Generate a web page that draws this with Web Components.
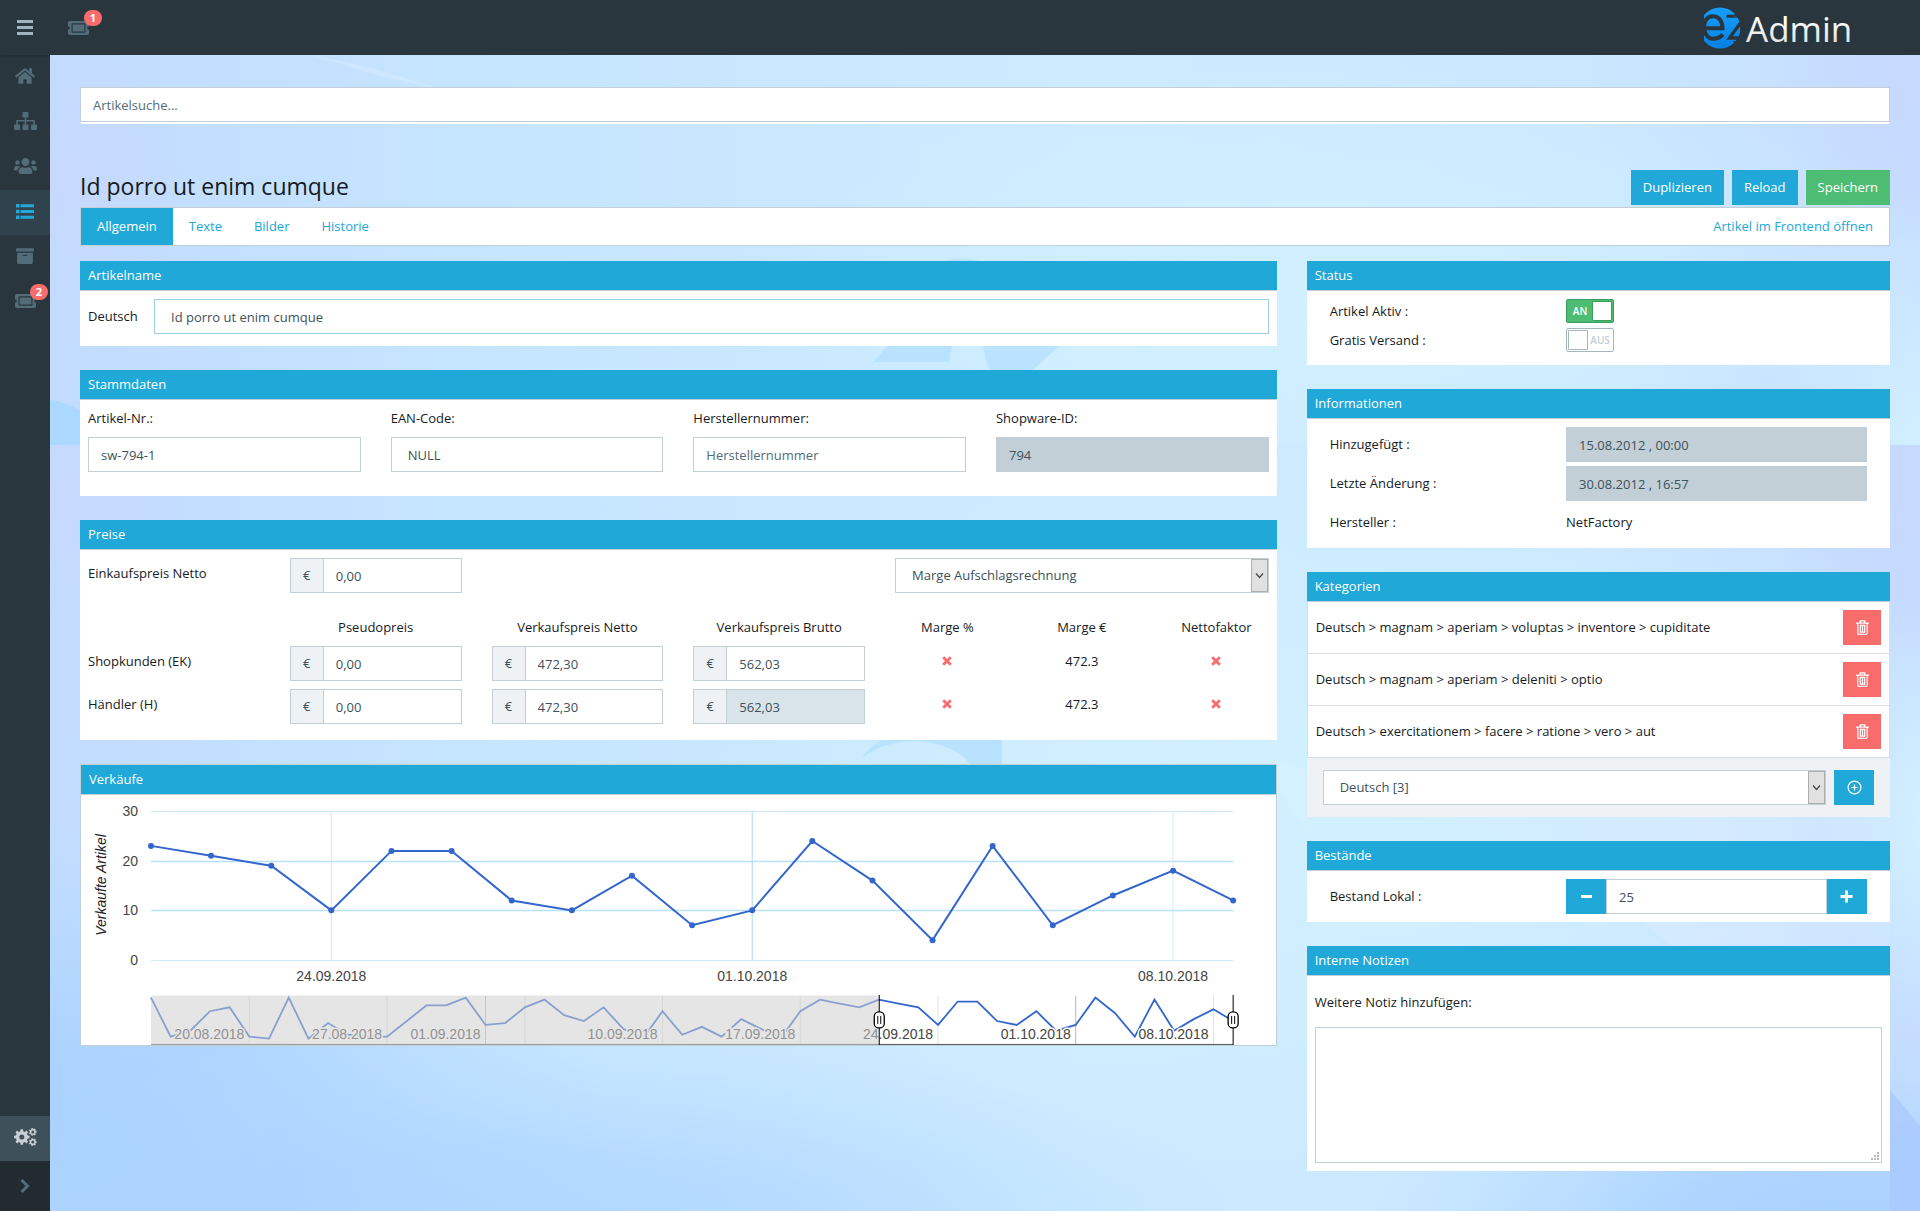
<!DOCTYPE html>
<html lang="de">
<head>
<meta charset="utf-8">
<meta name="viewport" content="width=device-width, initial-scale=1">
<title>ezAdmin</title>
<style>
  body { margin: 0; font: 13px/21px "Open Sans", "Noto Sans", sans-serif; color: #151b1e; }
</style>
</head>
<body>
<ez-page>
  <ez-topbar slot="top"></ez-topbar>
  <ez-sidebar slot="side"></ez-sidebar>
  <ez-search></ez-search>
  <ez-article-head heading="Id porro ut enim cumque"></ez-article-head>
  <ez-columns>
    <ez-card heading="Artikelname"><ez-name-form></ez-name-form></ez-card>
    <ez-card heading="Stammdaten"><ez-master-data></ez-master-data></ez-card>
    <ez-card heading="Preise"><ez-prices></ez-prices></ez-card>
    <ez-card heading="Verkäufe" framed><ez-chart></ez-chart></ez-card>
    <ez-card slot="right" heading="Status"><ez-status></ez-status></ez-card>
    <ez-card slot="right" heading="Informationen"><ez-info></ez-info></ez-card>
    <ez-card slot="right" heading="Kategorien"><ez-categories></ez-categories></ez-card>
    <ez-card slot="right" heading="Bestände"><ez-stock></ez-stock></ez-card>
    <ez-card slot="right" heading="Interne Notizen"><ez-notes></ez-notes></ez-card>
  </ez-columns>
</ez-page>

<script>
const BASE = `
  :host { display: block; }
  *, *::before, *::after { box-sizing: border-box; }
  button, input, select, textarea { font: inherit; margin: 0; border-radius: 0; }
  button { border: 0; padding: 0; height: 35px; color: #fff; background: #20a8d8; cursor: pointer; display: flex; align-items: center; justify-content: center; }
  input, textarea { display: block; width: 100%; height: 35px; padding: 0 12px; border: 1px solid #c2cfd6; background: #fff; color: #3e515b; outline: 0; }
  input::placeholder { color: #536c79; opacity: 1; }
  input:disabled { background: #c2cfd6; color: #3e515b; }
  input.wide { padding: 0 16px; }
  label { display: block; }
  a { color: #20a8d8; text-decoration: none; }
  .select { position: relative; display: block; }
  select { display: block; width: 100%; height: 35px; padding: 0 24px 0 16px; appearance: none; border: 1px solid #c2cfd6; background: #fff; color: #3e515b; outline: 0; }
  .select svg { position: absolute; top: 1px; right: 1px; bottom: 1px; width: 17px; height: 33px; background: #e1e1e1; border: 1px solid #adadad; pointer-events: none; }
  .pairs { display: grid; grid-template-columns: 5fr 7fr; align-items: center; }
  .pairs > * { margin: 0 15px; }
`;
const ARROW = `<svg viewBox="0 0 15 31" aria-hidden="true"><path d="M4 13.5l3.5 4 3.5-4" fill="none" stroke="#444" stroke-width="1.2"/></svg>`;

function define(name, css, html) {
  customElements.define(name, class extends HTMLElement {
    constructor() {
      super();
      const t = document.createElement('template');
      t.innerHTML = `<style>${BASE}${css}</style>${typeof html === 'function' ? html(this) : html}`;
      this.attachShadow({ mode: 'open' }).append(t.content.cloneNode(true));
    }
  });
}

/* ---------- icons ---------- */
function gear(cx, cy, r, hole, teeth) {
  let d = '';
  const step = Math.PI * 2 / teeth, inner = r * 0.76;
  for (let i = 0; i < teeth; i++) {
    const a = i * step;
    [[-.30, inner], [-.20, r], [.20, r], [.30, inner]].forEach(([f, q], k) => {
      d += (i || k ? 'L' : 'M') + (cx + q * Math.cos(a + f * step)).toFixed(2) + ' ' + (cy + q * Math.sin(a + f * step)).toFixed(2);
    });
  }
  return d + `ZM${cx - hole} ${cy}a${hole} ${hole} 0 1 0 ${hole * 2} 0a${hole} ${hole} 0 1 0 ${-hole * 2} 0Z`;
}
const ICONS = {
  menu: ['0 0 16 15', 16, 15, '<path d="M0 0h16v3H0zM0 6h16v3H0zM0 12h16v3H0z"/>'],
  home: ['0 24 576 464', 20, 16, '<path d="M280.37 148.26L96 300.11V464a16 16 0 0 0 16 16l112.06-.29a16 16 0 0 0 15.92-16V368a16 16 0 0 1 16-16h64a16 16 0 0 1 16 16v95.64a16 16 0 0 0 16 16.05L464 480a16 16 0 0 0 16-16V300L295.67 148.26a12.19 12.19 0 0 0-15.3 0zM571.6 251.47L488 182.56V44.05a12 12 0 0 0-12-12h-56a12 12 0 0 0-12 12v72.61L318.47 43a48 48 0 0 0-61 0L4.34 251.47a12 12 0 0 0-1.6 16.9l25.5 31A12 12 0 0 0 45.15 301l235.22-193.74a12.19 12.19 0 0 1 15.3 0L530.9 301a12 12 0 0 0 16.9-1.6l25.5-31a12 12 0 0 0-1.7-16.93z"/>'],
  sitemap: ['0 0 23 18', 23, 18, '<rect x="8.500" width="6" height="5.500" rx="1"/><path d="M10.750 5h1.500v8h-1.500zM2.250 8h18.500v5h-1.500V9.500H3.750V13h-1.500z"/><rect y="12.500" width="6" height="5.500" rx="1"/><rect x="8.500" y="12.500" width="6" height="5.500" rx="1"/><rect x="17" y="12.500" width="6" height="5.500" rx="1"/>'],
  users: ['0 32 640 448', 23, 16, '<path d="M96 224c35.3 0 64-28.7 64-64s-28.7-64-64-64-64 28.7-64 64 28.7 64 64 64zm448 0c35.3 0 64-28.7 64-64s-28.7-64-64-64-64 28.7-64 64 28.7 64 64 64zm32 32h-64c-17.6 0-33.5 7.100-45.100 18.600 40.300 22.100 68.900 62 75.100 109.400h66c17.700 0 32-14.300 32-32v-32c0-35.300-28.700-64-64-64zm-256 0c61.900 0 112-50.100 112-112S381.900 32 320 32 208 82.100 208 144s50.100 112 112 112zm76.800 32h-8.300c-20.800 10-43.900 16-68.500 16s-47.600-6-68.500-16h-8.300C179.600 288 128 339.600 128 403.200V432c0 26.500 21.500 48 48 48h288c26.500 0 48-21.500 48-48v-28.800c0-63.600-51.600-115.200-115.200-115.200zm-223.700-13.400C161.500 263.100 145.600 256 128 256H64c-35.300 0-64 28.700-64 64v32c0 17.700 14.300 32 32 32h65.900c6.300-47.400 34.900-87.300 75.200-109.400z"/>'],
  list: ['0 0 18 15', 18, 15, '<path d="M0 0h3.500v3.500H0zM0 5.750h3.500v3.500H0zM0 11.500h3.500V15H0zM4.500.25H18v3H4.500zM4.500 6H18v3H4.500zM4.500 11.750H18v3H4.500z"/>'],
  archive: ['0 32 512 448', 18, 16, '<path d="M32 448c0 17.700 14.300 32 32 32h384c17.700 0 32-14.300 32-32V160H32v288zm160-212c0-6.600 5.400-12 12-12h104c6.600 0 12 5.400 12 12v8c0 6.600-5.400 12-12 12H204c-6.600 0-12-5.400-12-12v-8zM480 32H32C14.300 32 0 46.300 0 64v48c0 8.800 7.200 16 16 16h480c8.800 0 16-7.200 16-16V64c0-17.700-14.300-32-32-32z"/>'],
  ticket: ['0 64 576 384', 21, 14, '<path d="M128 160h320v192H128V160zm400 96c0 26.510 21.490 48 48 48v96c0 26.510-21.490 48-48 48H48c-26.510 0-48-21.490-48-48v-96c26.510 0 48-21.490 48-48s-21.490-48-48-48v-96c0-26.510 21.490-48 48-48h480c26.510 0 48 21.490 48 48v96c-26.510 0-48 21.490-48 48zm-48-104c0-13.255-10.745-24-24-24H120c-13.255 0-24 10.745-24 24v208c0 13.255 10.745 24 24 24h336c13.255 0 24-10.745 24-24V152z"/>'],
  cogs: ['0 0 23 18', 23, 18, `<path fill-rule="evenodd" d="${gear(7.8, 9, 7.9, 2.5, 8)}${gear(18.8, 3.9, 4, 1.5, 7)}${gear(18.8, 14.100, 4, 1.5, 7)}"/>`],
  chevron: ['0 0 10 14', 10, 14, '<path d="M1.500 1l6 6-6 6" fill="none" stroke="currentColor" stroke-width="3"/>'],
  times: ['0 0 10 10', 10, 10, '<path d="M1.200 1.200l7.600 7.600M8.800 1.200L1.200 8.800" stroke="currentColor" stroke-width="2.800"/>'],
  trash: ['0 0 13 15', 13, 15, '<g fill="none" stroke="currentColor" stroke-width="1.200"><path d="M0 3.100h13M4.200 3V.8h4.600V3M1.800 3.300v9.900q0 1.100 1.100 1.100h7.200q1.100 0 1.100-1.100V3.300M4.300 5.400v6.800h4.400V5.400zM6.500 5.400v6.800"/></g>'],
  pluscircle: ['0 0 15 15', 15, 15, '<g fill="none" stroke="currentColor" stroke-width="1.200"><circle cx="7.500" cy="7.500" r="6.400"/><path d="M7.500 4.500v6M4.500 7.500h6"/></g>'],
  minus: ['0 0 13 13', 13, 13, '<path d="M1 5h11v3H1z"/>'],
  plus: ['0 0 13 13', 13, 13, '<path d="M.5 5H5V.5h3V5h4.500v3H8v4.500H5V8H.5z"/>'],
};
define('ez-icon', `:host { display: inline-flex; } svg { display: block; fill: currentColor; }`, el => {
  const [box, w, h, body] = ICONS[el.getAttribute('name')];
  return `<svg viewBox="${box}" width="${w}" height="${h}" aria-hidden="true">${body}</svg>`;
});

/* ---------- shell ---------- */
define('ez-backdrop', `svg { display: block; width: 100%; height: 100%; }`, `
<svg viewBox="50 55 1870 1156" preserveAspectRatio="none" aria-hidden="true">
  <defs>
    <linearGradient id="h"><stop offset="0" stop-color="#c2dbff"/><stop offset=".22" stop-color="#c5e5ff"/><stop offset=".55" stop-color="#cdebff"/><stop offset=".82" stop-color="#cae7ff"/><stop offset="1" stop-color="#c5dcff"/></linearGradient>
    <radialGradient id="c"><stop offset="0" stop-color="#d2f1ff"/><stop offset="1" stop-color="#d2f1ff" stop-opacity="0"/></radialGradient>
    <radialGradient id="b"><stop offset="0" stop-color="#a9d1ff"/><stop offset=".4" stop-color="#abd3ff" stop-opacity=".85"/><stop offset="1" stop-color="#b4dcff" stop-opacity="0"/></radialGradient>
    <radialGradient id="v"><stop offset="0" stop-color="#c7d8ff"/><stop offset="1" stop-color="#c7d8ff" stop-opacity="0"/></radialGradient>
    <linearGradient id="p" x1="0" y1="0" x2="1" y2="0"><stop offset="0" stop-color="#d8eaff" stop-opacity="0"/><stop offset=".6" stop-color="#d8eaff" stop-opacity=".7"/><stop offset="1" stop-color="#d8eaff" stop-opacity=".2"/></linearGradient>
    <clipPath id="t"><rect x="50" y="55" width="1870" height="390"/></clipPath>
    <clipPath id="u"><rect x="50" y="445" width="1870" height="766"/></clipPath>
  </defs>
  <g clip-path="url(#t)">
    <rect x="50" y="55" width="1870" height="390" fill="url(#h)"/>
    <ellipse cx="1350" cy="300" rx="600" ry="240" fill="url(#c)"/>
    <ellipse cx="1920" cy="460" rx="160" ry="280" fill="url(#c)"/>
    <ellipse cx="1920" cy="60" rx="140" ry="180" fill="url(#v)"/>
    <ellipse cx="70" cy="180" rx="120" ry="140" fill="url(#v)"/>
    <path d="M50 400q22 0 80 45H50z" fill="#aad8ff"/>
    <path d="M310 55q60 10 130 34l-50-10z" fill="#fff" opacity=".15"/>
    <path d="M888 346h64l-3 16h-76z" fill="#b8e2ff"/>
    <path d="M983 346h76l-26 24h-44q-4-12-6-24z" fill="#bbe3ff"/>
    <path d="M943 261q18-5 37 0z" fill="#bbe3ff"/>
  </g>
  <g clip-path="url(#u)">
    <rect x="50" y="445" width="1870" height="766" fill="url(#h)"/>
    <ellipse cx="60" cy="500" rx="140" ry="130" fill="url(#v)"/>
    <ellipse cx="1920" cy="470" rx="150" ry="250" fill="url(#v)"/>
    <ellipse cx="1350" cy="800" rx="640" ry="380" fill="url(#c)"/>
    <ellipse cx="1930" cy="820" rx="110" ry="220" fill="url(#c)"/>
    <ellipse cx="60" cy="1150" rx="560" ry="330" fill="url(#b)"/>
    <ellipse cx="520" cy="1230" rx="760" ry="200" fill="url(#b)" opacity=".7"/>
    <ellipse cx="1850" cy="1230" rx="480" ry="190" fill="url(#b)"/>
    <path d="M1277 760q20 4 30 14v54l-30-40z" fill="#d6f2ff" opacity=".6"/>
    <path d="M1430 815h460v140H1680q-90-90-250-140z" fill="url(#p)"/>
    <path d="M1890 1090l30 36v85h-30z" fill="#a8c8ff" opacity=".7"/>
    <path d="M862 758q8-12 20-18h120v24h-32q-15-19-50-23-35-1-58 17z" fill="#b8e2ff"/>
  </g>
</svg>`);

define('ez-page', `
  :host { position: relative; display: grid; grid-template: 55px 1fr / 50px 1fr; min-height: 100vh; }
  header { grid-column: 1 / 3; position: relative; box-shadow: 0 1px 2px rgba(20, 30, 40, .4); }
  nav { display: grid; }
  main { position: relative; min-width: 0; padding: 32px 30px 40px; }
  ez-backdrop { position: absolute; inset: 0; }
  .content { position: relative; }
`, `<header><slot name="top"></slot></header><nav><slot name="side"></slot></nav>
<main><ez-backdrop></ez-backdrop><div class="content"><slot></slot></div></main>`);

const BADGE = `.badge { position: absolute; min-width: 18px; height: 16px; padding: 0 5px; border-radius: 8px; background: #f86c6b; color: #fff; font-size: 11px; line-height: 16px; font-weight: 700; text-align: center; }`;

define('ez-topbar', `
  :host { display: flex; align-items: center; height: 55px; padding-right: 66px; background: #29363d; }
  button { width: 50px; background: none; color: #9fb3be; }
  a { position: relative; display: flex; margin-left: 18px; color: #536c79; }
  .badge { top: -11px; left: 16px; }
  .logo { margin-left: auto; display: block; }
  ${BADGE}
`, `
<button aria-label="Menü"><ez-icon name="menu"></ez-icon></button>
<a href="#tickets"><ez-icon name="ticket"></ez-icon><span class="badge">1</span></a>
<svg class="logo" width="150" height="55" viewBox="0 0 150 55" role="img" aria-label="ez Admin">
  <defs>
    <linearGradient id="g" x1="0" y1="0" x2="0" y2="1"><stop offset="0" stop-color="#189dfc"/><stop offset="1" stop-color="#0582e4"/></linearGradient>
    <linearGradient id="w" x1="0" y1="0" x2="0" y2="1"><stop offset=".3" stop-color="#fff"/><stop offset="1" stop-color="#d8d8d8"/></linearGradient>
    <clipPath id="k"><path d="M0 0h32l-2 9.500h6V34h-7l4 8H0z"/></clipPath>
  </defs>
  <g transform="translate(0 7)">
    <g clip-path="url(#k)">
      <circle cx="16" cy="21" r="20.500" fill="url(#g)"/>
      <path d="M0 21.200h18.500c0-7.500-4-12-9.500-12S.8 12.500 0 19c0 8 4 12.800 9 12.800 4 0 7-1.300 10-4.300" fill="none" stroke="#29363d" stroke-width="4"/>
      <path d="M22.500 9.300H37" stroke="#29363d" stroke-width="3"/>
      <path d="M36.500 16L25.500 31h11" fill="none" stroke="#29363d" stroke-width="3.400"/>
    </g>
  </g>
  <text x="42" y="42" font-family="Open Sans, Noto Sans, sans-serif" font-size="35" fill="url(#w)">Admin</text>
</svg>`);

define('ez-sidebar', `
  :host { display: flex; flex-direction: column; background: #29363d; }
  a { position: relative; height: 45px; display: flex; align-items: center; justify-content: center; padding-bottom: 3px; color: #536c79; }
  a.on { background: #30434c; color: #20a8d8; }
  a.cogs { margin-top: auto; background: #3e515b; color: #c8ced2; }
  button { height: 50px; background: #222b30; color: #536c79; }
  .badge { top: 4px; right: 2px; }
  ${BADGE}
`, `
<a href="#home" aria-label="Start"><ez-icon name="home"></ez-icon></a>
<a href="#tree" aria-label="Struktur"><ez-icon name="sitemap"></ez-icon></a>
<a href="#users" aria-label="Kunden"><ez-icon name="users"></ez-icon></a>
<a class="on" href="#articles" aria-label="Artikel"><ez-icon name="list"></ez-icon></a>
<a href="#archive" aria-label="Archiv"><ez-icon name="archive"></ez-icon></a>
<a href="#tickets" aria-label="Tickets"><ez-icon name="ticket"></ez-icon><span class="badge">2</span></a>
<a class="cogs" href="#settings" aria-label="Einstellungen"><ez-icon name="cogs"></ez-icon></a>
<button aria-label="Ausklappen"><ez-icon name="chevron"></ez-icon></button>`);

define('ez-search', `
  :host { margin-bottom: 46px; padding-bottom: 2px; background: #fff; border-radius: 3px; }
`, `<input type="search" placeholder="Artikelsuche..." aria-label="Artikelsuche">`);

define('ez-article-head', `
  :host { margin-bottom: 15px; }
  .row { display: flex; align-items: flex-start; gap: 8px; margin-bottom: 2px; }
  h1 { flex: 1; margin: 0; font-size: 23px; line-height: 32px; font-weight: 400; }
  button { padding: 0 12px; }
  .save { background: #4dbd74; }
  nav { display: flex; height: 39px; background: #fff; border: 1px solid #c2cfd6; }
  nav a { display: flex; align-items: center; padding: 0 16px; }
  nav a.on { background: #20a8d8; color: #fff; }
  nav a:last-child { margin-left: auto; }
`, el => `
<div class="row"><h1>${el.getAttribute('heading')}</h1>
  <button>Duplizieren</button><button>Reload</button><button class="save">Speichern</button></div>
<nav><a class="on" href="#general">Allgemein</a><a href="#texts">Texte</a><a href="#images">Bilder</a><a href="#history">Historie</a><a href="#frontend">Artikel im Frontend öffnen</a></nav>`);

define('ez-columns', `
  :host { display: grid; grid-template-columns: repeat(12, 1fr); column-gap: 30px; align-items: start; }
  div { display: grid; gap: 24px; min-width: 0; grid-column: span 8; }
  div + div { grid-column: span 4; }
`, `<div><slot></slot></div><div><slot name="right"></slot></div>`);

define('ez-card', `
  :host { background: #fff; }
  :host([framed]) { border: 1px solid #c2cfd6; }
  h2 { margin: 0; height: 30px; padding: 4px 8px; border-bottom: 1px solid #c2cfd6; background: #20a8d8; color: #fff; font-size: 13px; line-height: 21px; font-weight: 400; }
`, el => `<h2>${el.getAttribute('heading')}</h2><slot></slot>`);

/* ---------- left column ---------- */
define('ez-name-form', `
  :host { display: flex; align-items: center; padding: 8px 8px 12px; }
  label { flex: 0 0 66px; }
  input { border-color: #9fd0e2; }
`, `<label for="de">Deutsch</label><input id="de" class="wide" value="Id porro ut enim cumque">`);

define('ez-master-data', `
  :host { display: grid; grid-template-columns: repeat(4, 1fr); gap: 30px; padding: 8px 8px 24px; }
  label { margin-bottom: 8px; }
`, `
<div><label for="a">Artikel-Nr.:</label><input id="a" value="sw-794-1"></div>
<div><label for="b">EAN-Code:</label><input id="b" class="wide" value="NULL"></div>
<div><label for="c">Herstellernummer:</label><input id="c" placeholder="Herstellernummer"></div>
<div><label for="d">Shopware-ID:</label><input id="d" value="794" disabled></div>`);

define('ez-price', `
  :host { display: flex; height: 35px; }
  span { flex: 0 0 33px; display: flex; align-items: center; justify-content: center; border: 1px solid #c2cfd6; border-right: 0; background: #eef2f5; color: #3e515b; }
  input { min-width: 0; }
  input:disabled { background: #d8e4ea; }
`, el => `<span>€</span><input aria-label="${el.getAttribute('label')}" value="${el.getAttribute('value')}"${el.hasAttribute('disabled') ? ' disabled' : ''}>`);

const priceRow = (name, off) => `
<tr><th scope="row">${name}</th>
<td><ez-price label="${name} Pseudopreis" value="0,00"></ez-price></td>
<td><ez-price label="${name} Verkaufspreis Netto" value="472,30"></ez-price></td>
<td><ez-price label="${name} Verkaufspreis Brutto" value="562,03"${off}></ez-price></td>
<td class="num"><ez-icon name="times"></ez-icon></td><td class="num">472.3</td><td class="num"><ez-icon name="times"></ez-icon></td></tr>`;
define('ez-prices', `
  :host { padding: 8px 8px 8px; }
  .buy, table { width: calc(100% + 30px); margin: 0 -15px; }
  .buy { display: grid; grid-template-columns: repeat(6, 1fr); }
  .buy > * { margin: 0 15px; }
  .buy .lab { padding-top: 5px; }
  .buy .select { grid-column: 5 / 7; }
  table { margin-top: 24px; table-layout: fixed; border-collapse: collapse; }
  th, td { padding: 0 15px 8px; font-weight: 400; vertical-align: top; text-align: center; }
  tbody th { padding-top: 5px; text-align: left; }
  .num { padding-top: 5px; }
  ez-icon { color: #f86c6b; }
  .w { width: 16.6667%; }
`, `
<div class="buy"><div class="lab">Einkaufspreis Netto</div>
  <ez-price label="Einkaufspreis Netto" value="0,00"></ez-price>
  <div class="select"><select aria-label="Margenrechnung"><option>Marge Aufschlagsrechnung</option></select>${ARROW}</div></div>
<table>
  <colgroup><col class="w"><col class="w"><col class="w"><col class="w"><col><col><col></colgroup>
  <thead><tr><td></td><th scope="col">Pseudopreis</th><th scope="col">Verkaufspreis Netto</th><th scope="col">Verkaufspreis Brutto</th><th scope="col">Marge %</th><th scope="col">Marge €</th><th scope="col">Nettofaktor</th></tr></thead>
  <tbody>${priceRow('Shopkunden (EK)', '')}${priceRow('Händler (H)', ' disabled')}</tbody>
</table>`);

/* Sales chart: detail plot of the last 19 days over a range selector of 56 days. */
const SALES = [24,4,7,17,19,4,3,24,3,11,5,4,4,12,20,20,24,10,11,19,23,15,12,19,8,3,17,5,9,4,13,8,3,17,23,21,19,23,21,19,10,22,22,12,10,17,7,10,24,16,4,23,7,13,18,12];
function chart() {
  const L = 70, R = 1152.500, W = R - L, B = 165, U = 4.96;
  const recent = SALES.slice(37);
  const px = i => L + W * i / 18, py = v => B - v * U;
  const ox = i => L + W * i / 55, oy = v => 249.500 - v * 1.95;
  let s = '';
  for (const v of [0, 10, 20, 30]) {
    s += `<path d="M${L} ${Math.round(py(v)) + .5}H${R}" stroke="${v % 30 ? '#b8e1fa' : '#cbe8fb'}" stroke-width="${v % 30 ? 1.5 : 1}"/>`;
    s += `<text x="57" y="${Math.round(py(v)) + 5}" text-anchor="end">${v}</text>`;
  }
  [[3, '24.09.2018', '#cfe9fb'], [10, '01.10.2018', '#a5d8f8'], [17, '08.10.2018', '#cfe9fb']].forEach(([i, t, c]) => {
    s += `<path d="M${px(i).toFixed(1)} 16V165" stroke="${c}"/><text x="${px(i).toFixed(1)}" y="186" text-anchor="middle">${t}</text>`;
  });
  s += `<text transform="translate(25 90) rotate(-90)" text-anchor="middle" font-style="italic" style="fill:#222">Verkaufte Artikel</text>`;
  s += `<polyline fill="none" stroke="#36c" stroke-width="2" points="${recent.map((v, i) => px(i).toFixed(1) + ',' + py(v).toFixed(1)).join(' ')}"/>`;
  recent.forEach((v, i) => s += `<circle cx="${px(i).toFixed(1)}" cy="${py(v).toFixed(1)}" r="3" fill="#36c"/>`);
  for (const i of [5, 12, 17, 19, 26, 33, 40, 47, 54])
    s += `<path d="M${ox(i).toFixed(1)} 201V249" stroke="${i === 17 || i === 47 ? '#b7b7b7' : '#e3e3e3'}"/>`;
  s += `<polyline fill="none" stroke="#36c" stroke-width="1.800" points="${SALES.map((v, i) => ox(i).toFixed(1) + ',' + oy(v).toFixed(1)).join(' ')}"/>`;
  [[5, '20.08.2018'], [12, '27.08.2018'], [17, '01.09.2018'], [26, '10.09.2018'], [33, '17.09.2018'], [40, '24.09.2018'], [47, '01.10.2018'], [54, '08.10.2018']].forEach(([i, t]) => {
    s += `<text class="halo" x="${(ox(i) - 5).toFixed(1)}" y="244" text-anchor="end">${t}</text>`;
  });
  s += `<path d="M${L} 249.500H${R}" stroke="#555"/>`;
  s += `<path d="M${L} 200.500H${ox(37)}V250H${L}z" fill="#d0d0d0" opacity=".55"/>`;
  for (const i of [37, 55]) {
    const x = Math.floor(ox(i)) + .5;
    s += `<path d="M${x} 200V250" stroke="#000"/><rect x="${x - 5}" y="217" width="10" height="16" rx="4.500" fill="#fff" stroke="#000" stroke-width="1.300"/><path d="M${x - 1.5} 221v8M${x + 1.5} 221v8" stroke="#000"/>`;
  }
  return s;
}
define('ez-chart', `
  svg { display: block; width: 100%; height: auto; }
  text { font: 14px "Liberation Sans", Arial, sans-serif; fill: #444; }
  text[font-style] { font-style: italic; }
  .halo { paint-order: stroke; stroke: #fff; stroke-width: 3px; }
`, `<svg viewBox="0 0 1195 250" role="img" aria-label="Verkäufe">${chart()}</svg>`);

/* ---------- right column ---------- */
define('ez-switch', `
  :host { display: flex; }
  label { position: relative; display: flex; align-items: center; width: 48px; height: 24px; padding: 1px; border: 1px solid #a4b7c1; border-radius: 2px; background: #fff; color: #c2cfd6; font-size: 10px; line-height: 20px; font-weight: 600; }
  input { position: absolute; inset: 0; height: 100%; opacity: 0; cursor: pointer; }
  i { flex: 0 0 20px; height: 20px; border: 1px solid #a4b7c1; border-radius: 1px; background: #fff; }
  span { flex: 1; text-align: center; }
  label:has(:checked) { flex-direction: row-reverse; background: #4dbd74; border-color: #3a9d5d; color: #fff; }
  label:has(:checked) i { border-color: #3a9d5d; }
`, el => { const on = el.hasAttribute('on'); return `<label><input type="checkbox" aria-label="${el.getAttribute('label')}"${on ? ' checked' : ''}><i></i><span>${on ? 'AN' : 'AUS'}</span></label>`; });

define('ez-status', `:host { padding: 8px 8px 13px; } .pairs { row-gap: 5px; }`, `
<div class="pairs"><div>Artikel Aktiv :</div><ez-switch on label="Artikel Aktiv"></ez-switch>
<div>Gratis Versand :</div><ez-switch label="Gratis Versand"></ez-switch></div>`);

define('ez-info', `:host { padding: 8px; } .pairs { grid-auto-rows: 35px; row-gap: 4px; } input { width: auto; }`, `
<div class="pairs"><label for="a">Hinzugefügt :</label><input id="a" value="15.08.2012 , 00:00" disabled>
<label for="b">Letzte Änderung :</label><input id="b" value="30.08.2012 , 16:57" disabled>
<div>Hersteller :</div><div>NetFactory</div></div>`);

define('ez-category', `
  :host { display: flex; align-items: center; height: 52px; padding: 0 8px; border: solid #dedede; border-width: 0 1px 1px; }
  div { flex: 1; }
  button { width: 38px; background: #f86c6b; }
`, `<div><slot></slot></div><button aria-label="Kategorie entfernen"><ez-icon name="trash"></ez-icon></button>`);

define('ez-categories', `
  .foot { display: flex; gap: 8px; padding: 12px 16px; background: #eef2f5; }
  .select { flex: 1; }
  button { width: 40px; }
`, `
<ez-category>Deutsch &gt; magnam &gt; aperiam &gt; voluptas &gt; inventore &gt; cupiditate</ez-category>
<ez-category>Deutsch &gt; magnam &gt; aperiam &gt; deleniti &gt; optio</ez-category>
<ez-category>Deutsch &gt; exercitationem &gt; facere &gt; ratione &gt; vero &gt; aut</ez-category>
<div class="foot"><div class="select"><select aria-label="Kategorie"><option>Deutsch [3]</option></select>${ARROW}</div>
<button aria-label="Kategorie hinzufügen"><ez-icon name="pluscircle"></ez-icon></button></div>`);

define('ez-stock', `
  :host { padding: 8px; }
  .step { display: flex; }
  .step button { flex: 0 0 40px; }
  .step input { min-width: 0; }
`, `
<div class="pairs"><label for="n">Bestand Lokal :</label>
<div class="step"><button aria-label="Weniger"><ez-icon name="minus"></ez-icon></button><input id="n" inputmode="numeric" value="25"><button aria-label="Mehr"><ez-icon name="plus"></ez-icon></button></div></div>`);

define('ez-notes', `
  :host { padding: 16px 8px 8px; }
  label { margin-bottom: 14px; }
  textarea { height: 136px; padding: 8px 12px; resize: none; }
  .area { position: relative; }
  svg { position: absolute; right: 3px; bottom: 3px; fill: #b9b9b9; }
`, `<label for="t">Weitere Notiz hinzufügen:</label>
<div class="area"><textarea id="t"></textarea><svg width="8" height="8" viewBox="0 0 8 8" aria-hidden="true"><path d="M6 0h2v2H6zM3 3h2v2H3zM6 3h2v2H6zM0 6h2v2H0zM3 6h2v2H3zM6 6h2v2H6z"/></svg></div>`);
</script>
</body>
</html>
